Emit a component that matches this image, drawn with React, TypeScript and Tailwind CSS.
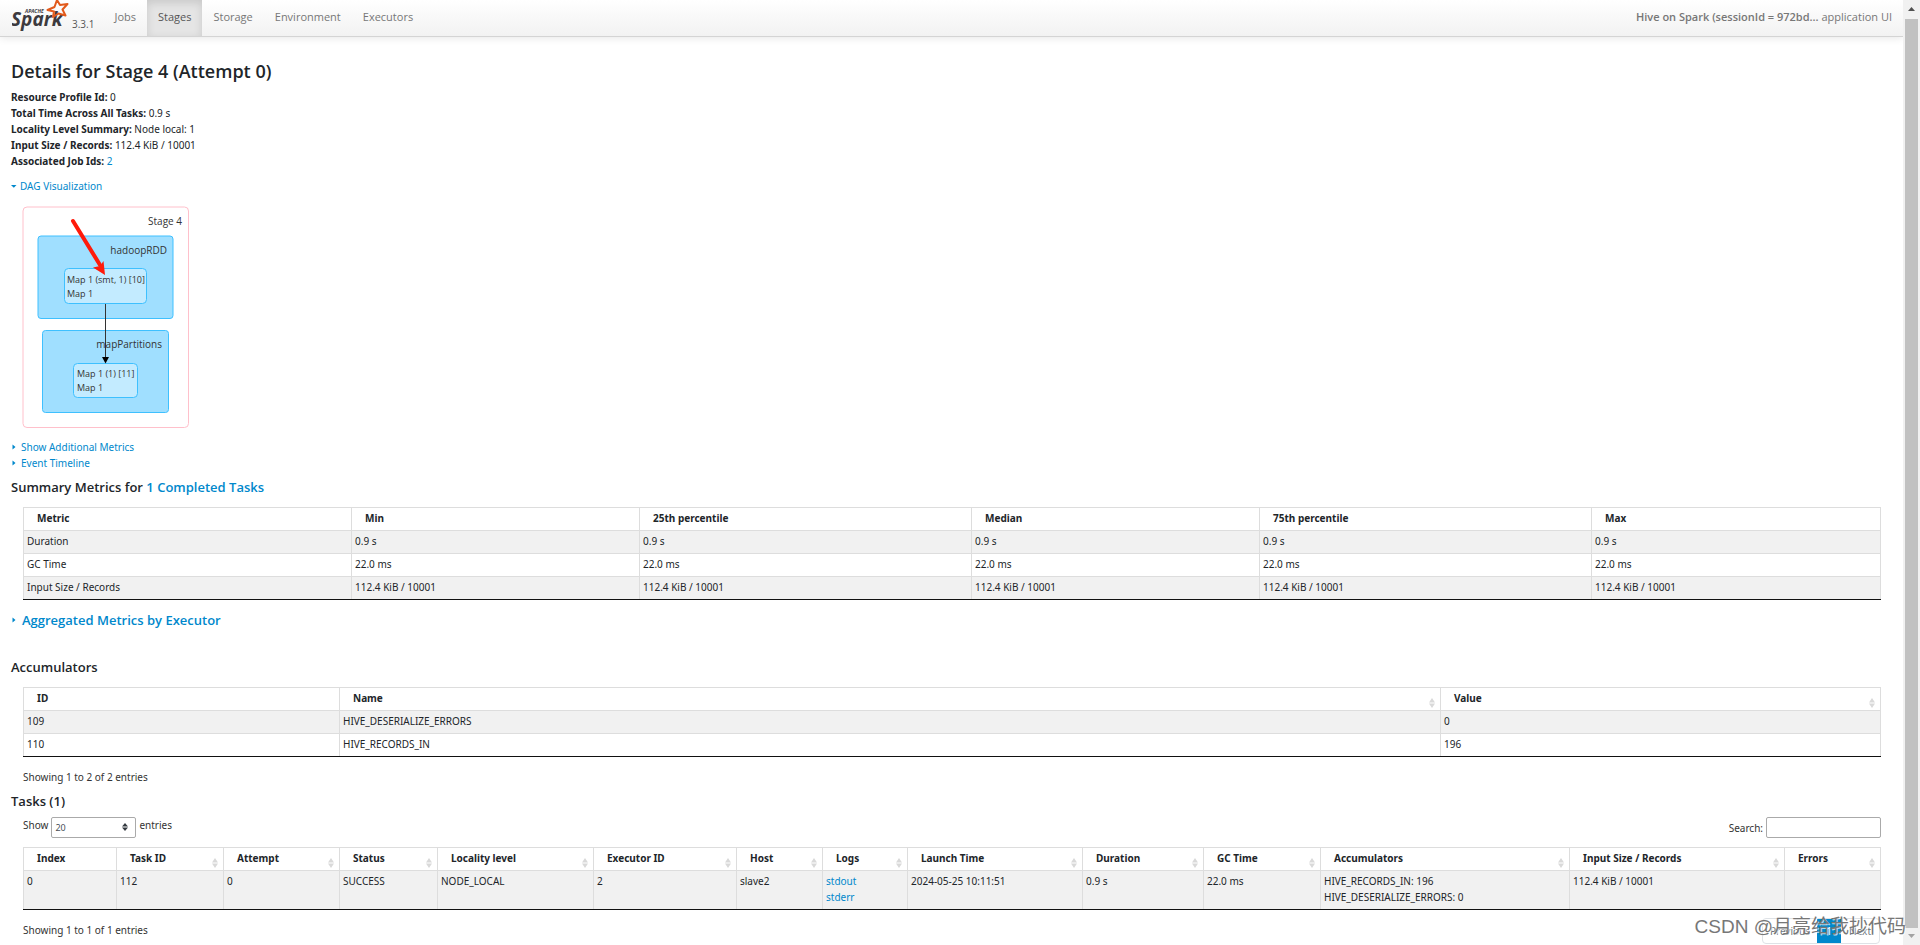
import React, { useState } from "react";

const navItems = ["Jobs", "Stages", "Storage", "Environment", "Executors"];

const details = [
    { label: "Resource Profile Id:", value: "0" },
    { label: "Total Time Across All Tasks:", value: "0.9 s" },
    { label: "Locality Level Summary:", value: "Node local: 1" },
    { label: "Input Size / Records:", value: "112.4 KiB / 10001" },
    { label: "Associated Job Ids:", value: "2", link: true },
];

interface Column {
    title: string;
    width: number;
    sortable?: boolean;
}

const summaryColumns: Column[] = [
    { title: "Metric", width: 328 },
    { title: "Min", width: 288 },
    { title: "25th percentile", width: 332 },
    { title: "Median", width: 288 },
    { title: "75th percentile", width: 332 },
    { title: "Max", width: 289 },
];

const summaryRows = [
    ["Duration", "0.9 s", "0.9 s", "0.9 s", "0.9 s", "0.9 s"],
    ["GC Time", "22.0 ms", "22.0 ms", "22.0 ms", "22.0 ms", "22.0 ms"],
    [
        "Input Size / Records",
        "112.4 KiB / 10001",
        "112.4 KiB / 10001",
        "112.4 KiB / 10001",
        "112.4 KiB / 10001",
        "112.4 KiB / 10001",
    ],
];

const accumulatorColumns: Column[] = [
    { title: "ID", width: 316 },
    { title: "Name", width: 1101, sortable: true },
    { title: "Value", width: 440, sortable: true },
];

const accumulatorRows = [
    ["109", "HIVE_DESERIALIZE_ERRORS", "0"],
    ["110", "HIVE_RECORDS_IN", "196"],
];

const taskColumns: Column[] = [
    { title: "Index", width: 93 },
    { title: "Task ID", width: 107, sortable: true },
    { title: "Attempt", width: 116, sortable: true },
    { title: "Status", width: 98, sortable: true },
    { title: "Locality level", width: 156, sortable: true },
    { title: "Executor ID", width: 143, sortable: true },
    { title: "Host", width: 86, sortable: true },
    { title: "Logs", width: 85, sortable: true },
    { title: "Launch Time", width: 175, sortable: true },
    { title: "Duration", width: 121, sortable: true },
    { title: "GC Time", width: 117, sortable: true },
    { title: "Accumulators", width: 249, sortable: true },
    { title: "Input Size / Records", width: 215, sortable: true },
    { title: "Errors", width: 96, sortable: true },
];

const taskRows: React.ReactNode[][] = [
    [
        "0",
        "112",
        "0",
        "SUCCESS",
        "NODE_LOCAL",
        "2",
        "slave2",
        <>
            <Link>stdout</Link>
            <br />
            <Link>stderr</Link>
        </>,
        "2024-05-25 10:11:51",
        "0.9 s",
        "22.0 ms",
        <>
            HIVE_RECORDS_IN: 196
            <br />
            HIVE_DESERIALIZE_ERRORS: 0
        </>,
        "112.4 KiB / 10001",
        "",
    ],
];

function Link({ children }: { children: React.ReactNode }) {
    return (
        <a href="#" className="text-[#0088cc] hover:underline">
            {children}
        </a>
    );
}

const SparkLogo = () => (
    <svg width="60" height="32" viewBox="0 0 60 32" aria-label="Apache Spark">
        <text
            x="-1"
            y="26"
            fontSize="19"
            fontWeight="bold"
            fontStyle="italic"
            fill="#3c3a3e"
            className="font-['Open_Sans',sans-serif]"
        >
            Spark
        </text>
        <text
            x="13"
            y="13"
            fontSize="5"
            fontWeight="bold"
            fontStyle="italic"
            fill="#3c3a3e"
            className="font-['Open_Sans',sans-serif]"
        >
            APACHE
        </text>
        <path
            d="M45 0 L48 5 L55.5 4 L50.5 9.5 L53.5 15.5 L46.5 13.5 L41 17 L42 11.5 L35.5 10 L42.5 7 Z"
            fill="none"
            stroke="#e25a1c"
            strokeWidth="2"
            strokeLinejoin="round"
        />
    </svg>
);

const Caret = ({ open }: { open?: boolean }) => (
    <svg width="6" height="6" viewBox="0 0 6 6" className="shrink-0" fill="#0088cc">
        {open ? <path d="M0 2h5.500L2.800 4.800z" /> : <path d="M1.500 0.500v5L4.500 3z" />}
    </svg>
);

const SortIcon = () => (
    <svg width="6" height="10" viewBox="0 0 6 10" className="shrink-0" fill="#d9d9d9">
        <path d="M0 4.500L3 0l3 4.500zM0 5.500L3 10l3-4.500z" />
    </svg>
);

const DagGraph = () => (
    <svg
        width="168"
        height="222"
        viewBox="22 206 168 222"
        className="mt-3 ml-[11px] block font-['Open_Sans',sans-serif]"
        fill="#333"
    >
        <rect x="23" y="207" width="165.5" height="220.5" rx="4" fill="#fff" stroke="#ffc0cb" />
        <text x="182" y="225" fontSize="10" textAnchor="end">
            Stage 4
        </text>
        <g fill="#a0dfff" stroke="#3ec0ff">
            <rect x="38" y="236" width="135" height="82.5" rx="3" />
            <rect x="42.5" y="330.5" width="126" height="82" rx="3" />
        </g>
        <g fill="#c3ebff" stroke="#3ec0ff">
            <rect x="64.5" y="268.5" width="82" height="35" rx="4" />
            <rect x="73.5" y="363.5" width="64" height="34" rx="4" />
        </g>
        <g fontSize="10" textAnchor="end">
            <text x="167" y="254">
                hadoopRDD
            </text>
            <text x="162" y="348">
                mapPartitions
            </text>
        </g>
        <g fontSize="9">
            <text x="67" y="283">
                Map 1 (smt, 1) [10]
            </text>
            <text x="67" y="297">
                Map 1
            </text>
            <text x="77" y="377">
                Map 1 (1) [11]
            </text>
            <text x="77" y="391">
                Map 1
            </text>
        </g>
        <path d="M105.5 304v54" stroke="#333" />
        <path d="M102 357h7l-3.5 6.5z" fill="#000" />
        <path d="M73 221L100 265" stroke="#ff1a0a" strokeWidth="4" strokeLinecap="round" />
        <path d="M105 275L93 267.500L100 266L103.500 261z" fill="#ff1a0a" />
    </svg>
);

interface DataTableProps {
    columns: Column[];
    rows: React.ReactNode[][];
    className?: string;
}

const DataTable: React.FC<DataTableProps> = ({ columns, rows, className }) => {
    const total = columns.reduce((sum, column) => sum + column.width, 0);

    return (
        <div className={`mr-[11px] ml-3 border-b border-[#111111] ${className}`}>
            <table className="w-full table-fixed border-collapse">
                <colgroup>
                    {columns.map((column) => (
                        <col
                            key={column.title}
                            style={{ width: `${(column.width / total) * 100}%` }}
                        />
                    ))}
                </colgroup>
                <thead>
                    <tr>
                        {columns.map((column) => (
                            <th
                                key={column.title}
                                className="border border-[#dddddd] p-0 text-left font-bold"
                            >
                                <div className="flex h-[22px] items-start justify-between pt-[2px] pr-[5px] pl-[13px]">
                                    <span className="whitespace-nowrap">{column.title}</span>
                                    {column.sortable && (
                                        <button
                                            aria-label={`Sort by ${column.title}`}
                                            className="self-end pb-[2px]"
                                        >
                                            <SortIcon />
                                        </button>
                                    )}
                                </div>
                            </th>
                        ))}
                    </tr>
                </thead>
                <tbody>
                    {rows.map((row, i) => (
                        <tr key={i} className="odd:bg-[#f1f1f1]">
                            {row.map((cell, j) => (
                                <td
                                    key={j}
                                    className="border-x border-t border-[#dddddd] px-[3px] pt-[2px] pb-1 align-top"
                                >
                                    {cell}
                                </td>
                            ))}
                        </tr>
                    ))}
                </tbody>
            </table>
        </div>
    );
};

const ScrollBar = () => (
    <div className="flex w-[17px] shrink-0 flex-col items-center bg-[#f1f1f1]">
        <svg width="17" height="19" viewBox="0 0 17 19" fill="#505050">
            <path d="M5 11h7L8.500 7z" />
        </svg>
        <div className="w-[13px] flex-1 bg-[#c1c1c1]" />
        <svg width="17" height="17" viewBox="0 0 17 17" fill="#a3a3a3">
            <path d="M5 6h7l-3.500 4z" />
        </svg>
    </div>
);

const App = () => {
    const [pageSize, setPageSize] = useState("20");
    const [search, setSearch] = useState("");

    return (
        <div className="relative flex min-h-screen overflow-hidden bg-white font-['Noto_Sans',sans-serif] text-[10px] leading-4 text-[#212529]">
            <div className="min-w-0 flex-1">
                <nav className="flex h-[37px] items-stretch border-b border-[#d4d4d4] bg-linear-to-b from-white to-[#f2f2f2] pr-[11px] pl-3 font-['Open_Sans',sans-serif] text-[11px] text-[#777777] shadow-[0_1px_8px_rgba(0,0,0,0.1)]">
                    <a href="#" className="flex w-[60px]">
                        <SparkLogo />
                    </a>
                    <span className="mr-[9px] self-end pb-1 text-[10px] text-[#555555]">
                        3.3.1
                    </span>
                    {navItems.map((item) => (
                        <a
                            key={item}
                            href="#"
                            className={`flex items-center px-[11px] pb-[2px] ${
                                item === "Stages"
                                    ? "bg-[#e5e5e5] text-[#555555] shadow-[inset_0_3px_8px_rgba(0,0,0,0.125)]"
                                    : ""
                            }`}
                        >
                            {item}
                        </a>
                    ))}
                    <p className="ml-auto self-center pb-[2px]">
                        <strong className="font-semibold">
                            Hive on Spark (sessionId = 972bd...
                        </strong>{" "}
                        application UI
                    </p>
                </nav>

                <main className="px-[11px]">
                    <h3 className="mt-[22px] mb-[6px] font-['Open_Sans',sans-serif] text-[18px] leading-6 font-semibold">
                        Details for Stage 4 (Attempt 0)
                    </h3>
                    <ul>
                        {details.map(({ label, value, link }) => (
                            <li key={label}>
                                <strong>{label}</strong> {link ? <Link>{value}</Link> : value}
                            </li>
                        ))}
                    </ul>

                    <button className="mt-[9px] flex items-center gap-[3px] text-[#0088cc]">
                        <Caret open />
                        DAG Visualization
                    </button>
                    <DagGraph />

                    <button className="mt-[11px] flex items-center gap-1 text-[#0088cc]">
                        <Caret />
                        Show Additional Metrics
                    </button>
                    <button className="flex items-center gap-1 text-[#0088cc]">
                        <Caret />
                        Event Timeline
                    </button>

                    <h4 className="mt-[6px] font-['Open_Sans',sans-serif] text-[13px] leading-5 font-semibold">
                        Summary Metrics for <Link>1 Completed Tasks</Link>
                    </h4>
                    <DataTable
                        columns={summaryColumns}
                        rows={summaryRows}
                        className="mt-[10px]"
                    />

                    <h4 className="mt-[10px] font-['Open_Sans',sans-serif] text-[13px] leading-5 font-semibold">
                        <button className="flex items-center gap-[5px] text-[#0088cc]">
                            <Caret />
                            Aggregated Metrics by Executor
                        </button>
                    </h4>

                    <h4 className="mt-[27px] font-['Open_Sans',sans-serif] text-[13px] leading-5 font-semibold">
                        Accumulators
                    </h4>
                    <DataTable
                        columns={accumulatorColumns}
                        rows={accumulatorRows}
                        className="mt-[10px]"
                    />
                    <p className="mt-3 px-3 text-[#333333]">Showing 1 to 2 of 2 entries</p>

                    <h4 className="mt-[6px] font-['Open_Sans',sans-serif] text-[13px] leading-5 font-semibold">
                        Tasks (1)
                    </h4>
                    <div className="mt-[6px] flex items-center justify-between pr-[11px] pl-3 text-[#333333]">
                        <label className="flex items-start gap-[3px]">
                            Show
                            <span className="relative flex">
                                <select
                                    value={pageSize}
                                    onChange={(e) => setPageSize(e.target.value)}
                                    className="h-[21px] w-[85px] appearance-none rounded-xs border border-[#aaaaaa] bg-white pl-[3px] text-[9px] text-[#495057]"
                                >
                                    <option>20</option>
                                    <option>40</option>
                                    <option>60</option>
                                    <option>100</option>
                                    <option>All</option>
                                </select>
                                <svg
                                    width="6"
                                    height="8"
                                    viewBox="0 0 6 8"
                                    fill="#343a40"
                                    className="pointer-events-none absolute top-[6px] right-2"
                                >
                                    <path d="M0 3.500L3 0l3 3.500zM0 4.500L3 8l3-3.500z" />
                                </svg>
                            </span>
                            entries
                        </label>
                        <label className="flex items-center gap-[3px]">
                            Search:
                            <input
                                type="search"
                                value={search}
                                onChange={(e) => setSearch(e.target.value)}
                                className="h-[21px] w-[115px] rounded-xs border border-[#aaaaaa] bg-white px-1"
                            />
                        </label>
                    </div>
                    <DataTable columns={taskColumns} rows={taskRows} className="mt-[9px]" />
                    <div className="mt-2 flex items-start justify-between px-3 text-[#333333]">
                        <p className="mt-1">Showing 1 to 1 of 1 entries</p>
                        <div className="flex h-[26px] items-stretch rounded-sm border border-[#dee2e6] text-[#6c757d]">
                            <button className="px-[7px]">Previous</button>
                            <button className="w-6 bg-[#0088cc] text-white">1</button>
                            <button className="px-2">Next</button>
                        </div>
                    </div>
                </main>
            </div>
            <ScrollBar />
            <div className="pointer-events-none absolute right-[14px] bottom-[6px] font-['Liberation_Sans','Noto_Sans_CJK_SC',sans-serif] text-[19px] leading-6 whitespace-nowrap text-[#777777] [text-shadow:1px_1px_0_rgba(255,255,255,0.7)]">
                CSDN @月亮给我抄代码
            </div>
        </div>
    );
};

export default App;
